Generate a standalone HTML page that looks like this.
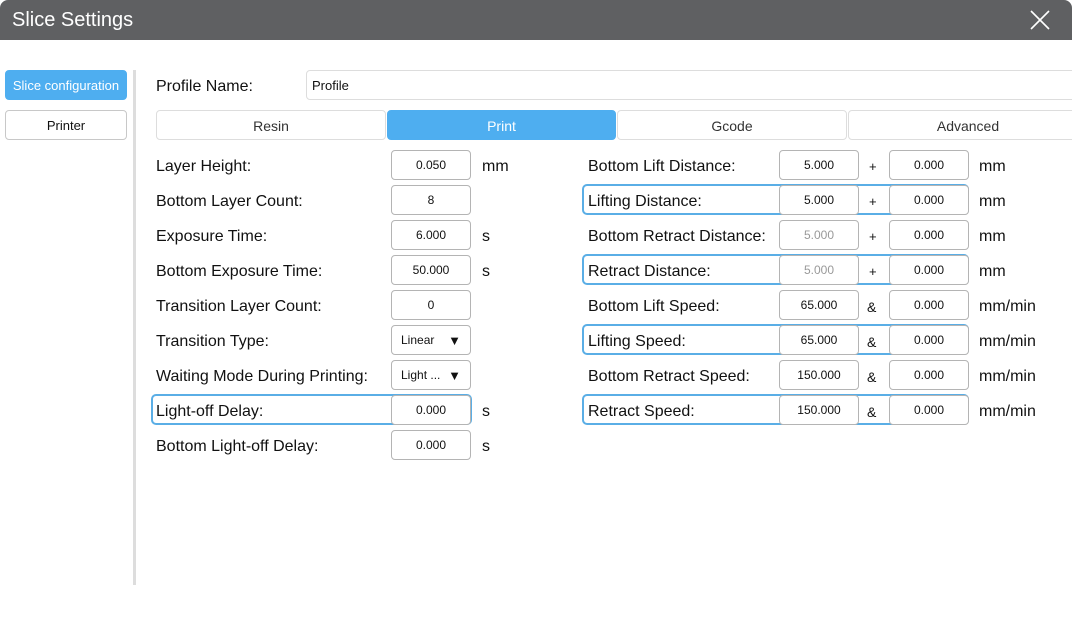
<!DOCTYPE html>
<html><head><meta charset="utf-8"><style>
*{box-sizing:border-box;margin:0;padding:0}
body{width:1072px;height:640px;background:#fff;font-family:"Liberation Sans",sans-serif;position:relative;overflow:hidden;color:#111}
.a{position:absolute}
.title{left:0;top:0;width:1072px;height:40px;background:#5f6062;border-radius:8px 8px 0 0;color:#fff;font-size:20px;line-height:41px;padding-left:12px}
.btn{position:absolute;border:1px solid #c8c8c8;border-radius:4px;font-size:13px;text-align:center;line-height:30px;background:#fff}
.lbl{position:absolute;font-size:16px;line-height:20px;white-space:nowrap;margin-top:1px}
.in{position:absolute;height:30px;width:80px;border:1px solid #b4b4b4;border-radius:4px;font-size:12px;text-align:center;line-height:29px;background:#fff}
.hl{position:absolute;height:31px;border:2px solid #5aaee6;border-radius:5px}
.g{color:#999}
</style></head><body>
<div class="a title">Slice Settings</div>
<svg class="a" style="left:1029px;top:9px" width="22" height="22"><path d="M2 2L20 20M20 2L2 20" stroke="#fff" stroke-width="1.6"/></svg>
<div class="btn" style="left:5px;top:70px;width:122px;height:30px;background:#4eaef0;border-color:#4eaef0;color:#fff">Slice configuration</div>
<div class="btn" style="left:5px;top:110px;width:122px;height:30px">Printer</div>
<div class="a" style="left:133px;top:70px;width:3px;height:515px;background:#ddd"></div>
<div class="lbl" style="left:156px;top:76px">Profile Name:</div>
<div class="a" style="left:306px;top:70px;width:780px;height:30px;border:1px solid #ddd;border-radius:4px;font-size:13px;line-height:29px;padding-left:5px">Profile</div>
<div class="btn" style="left:156px;top:110px;width:230px;height:30px;font-size:14px;color:#333;border-color:#ddd">Resin</div>
<div class="btn" style="left:387px;top:110px;width:229px;height:30px;font-size:14px;background:#4eaef0;border-color:#4eaef0;color:#fff">Print</div>
<div class="btn" style="left:617px;top:110px;width:230px;height:30px;font-size:14px;color:#333;border-color:#ddd">Gcode</div>
<div class="btn" style="left:848px;top:110px;width:240px;height:30px;font-size:14px;color:#333;border-color:#ddd">Advanced</div>

<div class="hl" style="left:151px;top:394px;width:321px"></div>
<div class="hl" style="left:582px;top:184px;width:387px"></div>
<div class="hl" style="left:582px;top:254px;width:387px"></div>
<div class="hl" style="left:582px;top:324px;width:387px"></div>
<div class="hl" style="left:582px;top:394px;width:387px"></div>

<div class="lbl" style="left:156px;top:156px">Layer Height:</div><div class="in" style="left:391px;top:150px">0.050</div><div class="lbl" style="left:482px;top:156px">mm</div>
<div class="lbl" style="left:156px;top:191px">Bottom Layer Count:</div><div class="in" style="left:391px;top:185px">8</div>
<div class="lbl" style="left:156px;top:226px">Exposure Time:</div><div class="in" style="left:391px;top:220px">6.000</div><div class="lbl" style="left:482px;top:226px">s</div>
<div class="lbl" style="left:156px;top:261px">Bottom Exposure Time:</div><div class="in" style="left:391px;top:255px">50.000</div><div class="lbl" style="left:482px;top:261px">s</div>
<div class="lbl" style="left:156px;top:296px">Transition Layer Count:</div><div class="in" style="left:391px;top:290px">0</div>
<div class="lbl" style="left:156px;top:331px">Transition Type:</div><div class="in" style="left:391px;top:325px;text-align:left;padding-left:9px">Linear<span style="position:absolute;right:9px;font-size:13px">▼</span></div>
<div class="lbl" style="left:156px;top:366px">Waiting Mode During Printing:</div><div class="in" style="left:391px;top:360px;text-align:left;padding-left:9px">Light ...<span style="position:absolute;right:9px;font-size:13px">▼</span></div>
<div class="lbl" style="left:156px;top:401px">Light-off Delay:</div><div class="in" style="left:391px;top:395px">0.000</div><div class="lbl" style="left:482px;top:401px">s</div>
<div class="lbl" style="left:156px;top:436px">Bottom Light-off Delay:</div><div class="in" style="left:391px;top:430px">0.000</div><div class="lbl" style="left:482px;top:436px">s</div>

<div class="lbl" style="left:588px;top:156px">Bottom Lift Distance:</div><div class="in" style="left:779px;top:150px">5.000</div><div class="lbl" style="left:869px;top:156px;font-size:13px">+</div><div class="in" style="left:889px;top:150px">0.000</div><div class="lbl" style="left:979px;top:156px">mm</div>
<div class="lbl" style="left:588px;top:191px">Lifting Distance:</div><div class="in" style="left:779px;top:185px">5.000</div><div class="lbl" style="left:869px;top:191px;font-size:13px">+</div><div class="in" style="left:889px;top:185px">0.000</div><div class="lbl" style="left:979px;top:191px">mm</div>
<div class="lbl" style="left:588px;top:226px">Bottom Retract Distance:</div><div class="in g" style="left:779px;top:220px">5.000</div><div class="lbl" style="left:869px;top:226px;font-size:13px">+</div><div class="in" style="left:889px;top:220px">0.000</div><div class="lbl" style="left:979px;top:226px">mm</div>
<div class="lbl" style="left:588px;top:261px">Retract Distance:</div><div class="in g" style="left:779px;top:255px">5.000</div><div class="lbl" style="left:869px;top:261px;font-size:13px">+</div><div class="in" style="left:889px;top:255px">0.000</div><div class="lbl" style="left:979px;top:261px">mm</div>
<div class="lbl" style="left:588px;top:296px">Bottom Lift Speed:</div><div class="in" style="left:779px;top:290px">65.000</div><div class="lbl" style="left:867px;top:296px;font-size:14px">&amp;</div><div class="in" style="left:889px;top:290px">0.000</div><div class="lbl" style="left:979px;top:296px">mm/min</div>
<div class="lbl" style="left:588px;top:331px">Lifting Speed:</div><div class="in" style="left:779px;top:325px">65.000</div><div class="lbl" style="left:867px;top:331px;font-size:14px">&amp;</div><div class="in" style="left:889px;top:325px">0.000</div><div class="lbl" style="left:979px;top:331px">mm/min</div>
<div class="lbl" style="left:588px;top:366px">Bottom Retract Speed:</div><div class="in" style="left:779px;top:360px">150.000</div><div class="lbl" style="left:867px;top:366px;font-size:14px">&amp;</div><div class="in" style="left:889px;top:360px">0.000</div><div class="lbl" style="left:979px;top:366px">mm/min</div>
<div class="lbl" style="left:588px;top:401px">Retract Speed:</div><div class="in" style="left:779px;top:395px">150.000</div><div class="lbl" style="left:867px;top:401px;font-size:14px">&amp;</div><div class="in" style="left:889px;top:395px">0.000</div><div class="lbl" style="left:979px;top:401px">mm/min</div>
</body></html>
